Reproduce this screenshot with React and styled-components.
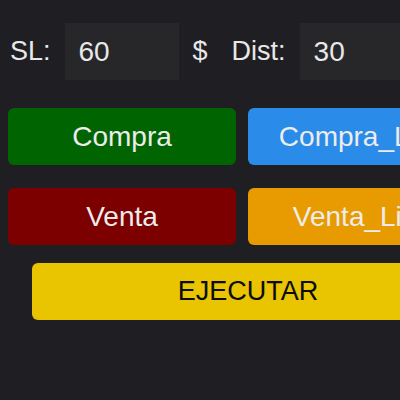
import React from 'react'
import styled, { createGlobalStyle } from 'styled-components'

const GlobalStyle = createGlobalStyle`
  html, body {
    margin: 0;
    padding: 0;
    background: #1f1f23;
    overflow: hidden;
  }
  body {
    font-family: "Liberation Sans", Arial, sans-serif;
  }
`

const Panel = styled.div`
  width: 720px;
  padding: 23px 0 0 8px;
  display: flex;
  flex-direction: column;
`

const ParamsRow = styled.div`
  display: flex;
  align-items: center;
  height: 57px;
  padding-left: 2px;
`

const Label = styled.span`
  color: #e8e8e8;
  font-size: 27px;
  margin-right: ${props => props.$gap || 14}px;
`

const Field = styled.input`
  width: ${props => props.$width || 114}px;
  height: 57px;
  box-sizing: border-box;
  border: none;
  outline: none;
  background: #27272a;
  color: #e8e8e8;
  font-family: inherit;
  font-size: 28px;
  padding: 0 14px;
  margin-right: 14px;
`

const ButtonGrid = styled.div`
  display: grid;
  grid-template-columns: 228px 236px;
  column-gap: 12px;
  row-gap: 23px;
  margin-top: 28px;
`

const TradeButton = styled.button`
  height: 57px;
  border: none;
  border-radius: 6px;
  background: ${props => props.$bg};
  color: #ececec;
  font-family: inherit;
  font-size: 28px;
  padding: 0;
  white-space: nowrap;
  cursor: pointer;
`

const RunButton = styled.button`
  width: 432px;
  height: 57px;
  margin: 18px 0 0 24px;
  border: none;
  border-radius: 6px;
  background: #e8c500;
  color: #0c0c0c;
  font-family: inherit;
  font-size: 27px;
  padding: 0;
  cursor: pointer;
`

export default function App() {
  return (
    <>
      <GlobalStyle />
      <Panel>
        <ParamsRow>
          <Label>SL:</Label>
          <Field defaultValue="60" />
          <Label $gap={24}>$</Label>
          <Label>Dist:</Label>
          <Field defaultValue="30" $width={160} />
        </ParamsRow>
        <ButtonGrid>
          <TradeButton $bg="#006400">Compra</TradeButton>
          <TradeButton $bg="#2a8ce8">Compra_Limit</TradeButton>
          <TradeButton $bg="#7d0000">Venta</TradeButton>
          <TradeButton $bg="#e89b00">Venta_Limit</TradeButton>
        </ButtonGrid>
        <RunButton>EJECUTAR</RunButton>
      </Panel>
    </>
  )
}
